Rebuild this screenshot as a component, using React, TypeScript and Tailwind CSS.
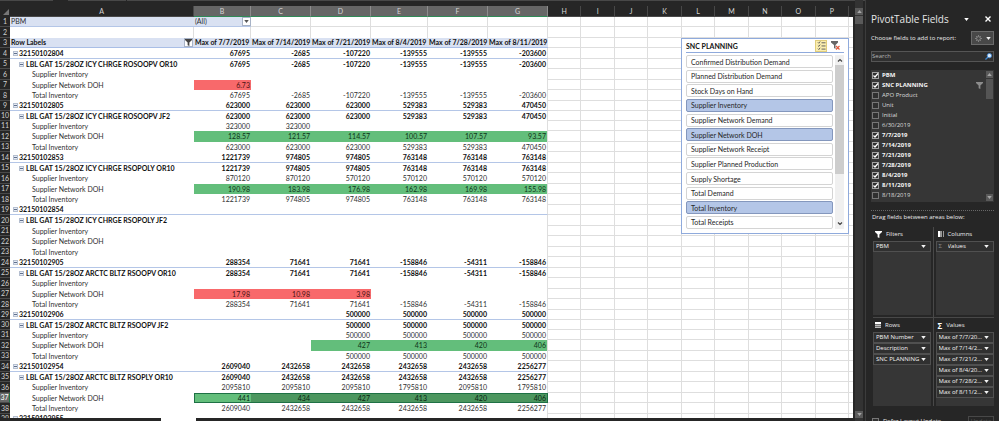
import { useState } from 'react';
import clsx from 'clsx';

type Level = 0 | 1 | 2;
type Tone = 'green' | 'red' | 'selected';

interface PivotRow {
  label: string;
  level: Level;
  values?: string[];
  tone?: Tone;
}

const COLUMNS = ['A', 'B', 'C', 'D', 'E', 'F', 'G', 'H', 'I', 'J', 'K', 'L', 'M', 'N', 'O', 'P'];
const EMPTY_COLUMNS = COLUMNS.slice(7);
const VALUE_HEADERS = ['7/7/2019', '7/14/2019', '7/21/2019', '8/4/2019', '7/28/2019', '8/11/2019'];

const ROWS: PivotRow[] = [
  { label: '32150102804', level: 0, values: ['67695', '-2685', '-107220', '-139555', '-139555', '-203600'] },
  { label: 'LBL GAT 15/28OZ ICY CHRGE ROSOOPV OR10', level: 1, values: ['67695', '-2685', '-107220', '-139555', '-139555', '-203600'] },
  { label: 'Supplier Inventory', level: 2 },
  { label: 'Supplier Network DOH', level: 2, values: ['6.73'], tone: 'red' },
  { label: 'Total Inventory', level: 2, values: ['67695', '-2685', '-107220', '-139555', '-139555', '-203600'] },
  { label: '32150102805', level: 0, values: ['623000', '623000', '623000', '529383', '529383', '470450'] },
  { label: 'LBL GAT 15/28OZ ICY CHRGE ROSOOPV JF2', level: 1, values: ['623000', '623000', '623000', '529383', '529383', '470450'] },
  { label: 'Supplier Inventory', level: 2, values: ['323000', '323000'] },
  { label: 'Supplier Network DOH', level: 2, values: ['128.57', '121.57', '114.57', '100.57', '107.57', '93.57'], tone: 'green' },
  { label: 'Total Inventory', level: 2, values: ['623000', '623000', '623000', '529383', '529383', '470450'] },
  { label: '32150102853', level: 0, values: ['1221739', '974805', '974805', '763148', '763148', '763148'] },
  { label: 'LBL GAT 15/28OZ ICY CHRGE RSOPOLY OR10', level: 1, values: ['1221739', '974805', '974805', '763148', '763148', '763148'] },
  { label: 'Supplier Inventory', level: 2, values: ['870120', '870120', '570120', '570120', '570120', '570120'] },
  { label: 'Supplier Network DOH', level: 2, values: ['190.98', '183.98', '176.98', '162.98', '169.98', '155.98'], tone: 'green' },
  { label: 'Total Inventory', level: 2, values: ['1221739', '974805', '974805', '763148', '763148', '763148'] },
  { label: '32150102854', level: 0 },
  { label: 'LBL GAT 15/28OZ ICY CHRGE RSOPOLY JF2', level: 1 },
  { label: 'Supplier Inventory', level: 2 },
  { label: 'Supplier Network DOH', level: 2 },
  { label: 'Total Inventory', level: 2 },
  { label: '32150102905', level: 0, values: ['288354', '71641', '71641', '-158846', '-54311', '-158846'] },
  { label: 'LBL GAT 15/28OZ ARCTC BLTZ RSOOPV OR10', level: 1, values: ['288354', '71641', '71641', '-158846', '-54311', '-158846'] },
  { label: 'Supplier Inventory', level: 2 },
  { label: 'Supplier Network DOH', level: 2, values: ['17.98', '10.98', '3.98'], tone: 'red' },
  { label: 'Total Inventory', level: 2, values: ['288354', '71641', '71641', '-158846', '-54311', '-158846'] },
  { label: '32150102906', level: 0, values: ['', '', '500000', '500000', '500000', '500000'] },
  { label: 'LBL GAT 15/28OZ ARCTC BLTZ RSOOPV JF2', level: 1, values: ['', '', '500000', '500000', '500000', '500000'] },
  { label: 'Supplier Inventory', level: 2, values: ['', '', '500000', '500000', '500000', '500000'] },
  { label: 'Supplier Network DOH', level: 2, values: ['', '', '427', '413', '420', '406'], tone: 'green' },
  { label: 'Total Inventory', level: 2, values: ['', '', '500000', '500000', '500000', '500000'] },
  { label: '32150102954', level: 0, values: ['2609040', '2432658', '2432658', '2432658', '2432658', '2256277'] },
  { label: 'LBL GAT 15/28OZ ARCTC BLTZ RSOPLY OR10', level: 1, values: ['2609040', '2432658', '2432658', '2432658', '2432658', '2256277'] },
  { label: 'Supplier Inventory', level: 2, values: ['2095810', '2095810', '2095810', '1795810', '2095810', '1795810'] },
  { label: 'Supplier Network DOH', level: 2, values: ['441', '434', '427', '413', '420', '406'], tone: 'selected' },
  { label: 'Total Inventory', level: 2, values: ['2609040', '2432658', '2432658', '2432658', '2432658', '2256277'] },
  { label: '32150102955', level: 0 },
];

const SLICER_ITEMS = [
  'Confirmed Distribution Demand',
  'Planned Distribution Demand',
  'Stock Days on Hand',
  'Supplier Inventory',
  'Supplier Network Demand',
  'Supplier Network DOH',
  'Supplier Network Receipt',
  'Supplier Planned Production',
  'Supply Shortage',
  'Total Demand',
  'Total Inventory',
  'Total Receipts',
];

const FIELDS = [
  { name: 'PBM', checked: true },
  { name: 'SNC PLANNING', checked: true, filtered: true },
  { name: 'APO Product', checked: false },
  { name: 'Unit', checked: false },
  { name: 'Initial', checked: false },
  { name: '6/30/2019', checked: false },
  { name: '7/7/2019', checked: true },
  { name: '7/14/2019', checked: true },
  { name: '7/21/2019', checked: true },
  { name: '7/28/2019', checked: true },
  { name: '8/4/2019', checked: true },
  { name: '8/11/2019', checked: true },
  { name: '8/18/2019', checked: false },
  { name: '8/25/2019', checked: false },
];

const ROW_CLASS = 'h-[10px] even:h-[11px] nth-[20n+10]:h-[10px]';
const GRID_CELL = 'border-r border-b border-[#dedede] p-0';

function Caret({ className }: { className?: string }) {
  return (
    <svg viewBox="0 0 6 4" className={clsx('h-[3px] w-[5px] shrink-0', className)} fill="currentColor">
      <path d="M0 0h6L3 4z" />
    </svg>
  );
}

function Funnel({ className }: { className?: string }) {
  return (
    <svg viewBox="0 0 8 8" className={clsx('h-[7px] w-[7px] shrink-0', className)} fill="currentColor">
      <path d="M0 0h8v1L5 4v4L3 7V4L0 1z" />
    </svg>
  );
}

function ScrollButton({ label, up, className }: { label: string; up?: boolean; className?: string }) {
  return (
    <button aria-label={label} className={clsx('flex h-[7px] w-full shrink-0 items-center justify-center bg-[#5a5a5a] text-[#a8a8a8]', className)}>
      <Caret className={clsx('h-[2px] w-[4px]', up && 'rotate-180')} />
    </button>
  );
}

function CollapseButton({ label }: { label: string }) {
  return (
    <button aria-label={`Collapse ${label}`} className="flex size-[5px] shrink-0 items-center justify-center border border-[#b5bfd0] bg-[#e6ebf4]">
      <span className="h-px w-[3px] bg-[#60708c]" />
    </button>
  );
}

function RowHeading({ row, active }: { row: number; active?: boolean }) {
  return (
    <th
      scope="row"
      className={clsx(
        'border-b border-[#4a4a4a] p-0 text-center font-normal',
        active ? 'border-r border-r-[#1e7145] bg-[#686868] text-white' : 'bg-[#262626] text-[#d0d0d0]',
      )}
    >
      <div className="h-[9px]">{row}</div>
    </th>
  );
}

function EmptyCells() {
  return (
    <>
      {EMPTY_COLUMNS.map((c) => (
        <td key={c} className={GRID_CELL} />
      ))}
      <td className="border-b border-[#dedede] p-0" />
    </>
  );
}

function valueClass(row: PivotRow, index: number) {
  const value = row.values?.[index];
  if (!row.tone || !value) return '';
  if (row.tone === 'red') return 'bg-[#f8696b] text-[#4a1213]';
  if (row.tone === 'green') return 'bg-[#63be7b] text-[#0f3318]';
  return clsx(
    'border-y border-[#1e7145] text-[#0a2411]',
    index === 0 ? 'border-l bg-[#63be7b]' : 'bg-[#4c965f]',
    index === 5 && 'border-r',
  );
}

function Sheet() {
  return (
    <table className="w-full table-fixed border-separate border-spacing-0 bg-white font-['Lato',sans-serif] text-[7px] leading-[9px] whitespace-nowrap text-[#303030]">
      <colgroup>
        <col className="w-[10px]" />
        <col className="w-[184px]" />
        <col className="w-[57px]" />
        <col className="w-[60px]" />
        <col className="w-[60px]" />
        <col className="w-[57px]" />
        <col className="w-[60px]" />
        <col className="w-[60px]" />
        {EMPTY_COLUMNS.map((c) => (
          <col key={c} />
        ))}
        <col className="w-[4px]" />
      </colgroup>
      <thead>
        <tr className="h-[11px]">
          <th className="bg-[#262626] p-0">
            <svg viewBox="0 0 6 6" className="ml-[3px] size-[6px]" fill="#777">
              <path d="M6 0v6H0z" />
            </svg>
          </th>
          {COLUMNS.map((c, i) => (
            <th
              key={c}
              scope="col"
              className={clsx(
                'border-r border-b p-0 font-normal text-[#d6d6d6]',
                i > 0 && i < 7 ? 'border-r-[#8c8c8c] border-b-[#2f8a57] bg-[#666]' : 'border-r-[#484848] border-b-[#484848] bg-[#262626]',
              )}
            >
              {c}
            </th>
          ))}
          <td className="bg-[#262626] p-0" />
        </tr>
      </thead>
      <tbody>
        <tr className={ROW_CLASS}>
          <RowHeading row={1} />
          <td className="border-b border-[#b4c6e7] bg-[#d9e1f2] p-0 pl-px">PBM</td>
          <td className="border-b border-[#b4c6e7] bg-[#d9e1f2] p-0 pl-px">
            <div className="flex items-center justify-between">
              (All)
              <button aria-label="Filter PBM" className="flex size-[9px] items-center justify-center border border-[#a8b3c6] bg-white text-[#555]">
                <Caret className="h-[2px] w-[4px]" />
              </button>
            </div>
          </td>
          {VALUE_HEADERS.slice(1).map((h) => (
            <td key={h} className={GRID_CELL} />
          ))}
          <EmptyCells />
        </tr>
        <tr className={ROW_CLASS}>
          <RowHeading row={2} />
          <td className="border-r border-[#dedede] p-0" />
          {VALUE_HEADERS.map((h) => (
            <td key={h} className="border-r border-[#dedede] p-0" />
          ))}
          <EmptyCells />
        </tr>
        <tr className={ROW_CLASS}>
          <RowHeading row={3} />
          <th className="border-b border-[#a9bee6] bg-[#d9e1f2] p-0 pl-px text-left font-bold text-[#111]">
            <div className="flex items-center justify-between pr-px">
              Row Labels
              <button aria-label="Filter row labels" className="flex size-[9px] items-center justify-center border border-[#a8b3c6] bg-white text-[#444]">
                <Funnel className="h-[5px] w-[5px]" />
              </button>
            </div>
          </th>
          {VALUE_HEADERS.map((h) => (
            <th key={h} className="border-b border-[#a9bee6] bg-[#d9e1f2] p-0 pl-px text-left font-bold text-[#111]">
              Max of {h}
            </th>
          ))}
          <EmptyCells />
        </tr>
        {ROWS.map((row, i) => (
          <tr key={i} className={ROW_CLASS}>
            <RowHeading row={i + 4} active={row.tone === 'selected'} />
            <td
              className={clsx(
                'p-0',
                row.level === 0 && 'border-b border-[#b4c6e7] pl-[3px]',
                row.level === 1 && 'pl-[9px]',
                row.level === 2 && 'pl-[22px]',
                row.level < 2 && 'font-bold text-[#111]',
              )}
            >
              <div className={clsx('flex items-center', row.level === 0 ? 'gap-px' : 'gap-[2px]')}>
                {row.level < 2 && <CollapseButton label={row.label} />}
                {row.label}
              </div>
            </td>
            {VALUE_HEADERS.map((h, v) => (
              <td
                key={h}
                className={clsx(
                  'p-0 pr-px text-right',
                  row.level === 0 && 'border-b border-[#b4c6e7]',
                  row.level < 2 && 'font-bold text-[#111]',
                  v === 5 && row.tone !== 'selected' && 'border-r border-r-[#dedede]',
                  valueClass(row, v),
                )}
              >
                <div className="-my-px">{row.values?.[v]}</div>
              </td>
            ))}
            <EmptyCells />
          </tr>
        ))}
      </tbody>
    </table>
  );
}

function Slicer() {
  const [selected, setSelected] = useState(['Supplier Inventory', 'Supplier Network DOH', 'Total Inventory']);

  const toggle = (item: string) => {
    setSelected((prev) => (prev.includes(item) ? prev.filter((s) => s !== item) : [...prev, item]));
  };

  return (
    <section className="absolute top-[32px] right-[4px] w-[168px] border border-[#8faadc] bg-white px-[4px] pb-[4px] font-['Lato',sans-serif] text-[#262626]">
      <header className="flex h-[14px] items-center border-b border-[#8faadc] text-[7px] leading-[10px]">
        <h2 className="flex-1 font-bold text-[#111]">SNC PLANNING</h2>
        <button aria-label="Multi-select" className="flex h-[12px] w-[12px] items-center justify-center border border-[#e0cd7c] bg-[#fbeeb0]">
          <svg viewBox="0 0 10 10" className="size-[9px]" fill="none" stroke="#555" strokeWidth="1">
            <path d="M1 1.5l1 1L3.500.5M1 5l1 1 1.500-2M1 8.500l1 1 1.500-2M5 2h4.500M5 5.500h4.500M5 9h4.500" />
          </svg>
        </button>
        <button aria-label="Clear filter" className="mx-[4px] flex h-[12px] w-[9px] items-center justify-center">
          <svg viewBox="0 0 9 9" className="size-[9px]">
            <path d="M0 0h7v1.500L4.500 4v4L3 7V4L0 1.500z" fill="#666" />
            <path d="M5 5l3.500 3.500M8.500 5L5 8.500" stroke="#e0593c" strokeWidth="1.200" />
          </svg>
        </button>
      </header>
      <div className="mt-[2px] flex h-[174px] gap-[2px]">
        <ul className="flex flex-1 flex-col justify-between">
          {SLICER_ITEMS.map((item) => (
            <li key={item} className="flex">
              <button
                aria-pressed={selected.includes(item)}
                onClick={() => toggle(item)}
                className={clsx(
                  'h-[13px] w-full rounded-[2px] border pl-[4px] text-left text-[7px] leading-[10px]',
                  selected.includes(item) ? 'border-[#8497bd] bg-[#b4c6e7]' : 'border-[#d4d4d4] bg-white',
                )}
              >
                {item}
              </button>
            </li>
          ))}
        </ul>
        <div className="flex w-[9px] flex-col bg-[#f0f0f0]">
          <button aria-label="Scroll slicer up" className="flex h-[10px] items-center justify-center">
            <svg viewBox="0 0 6 4" className="h-[4px] w-[6px]" fill="none" stroke="#444" strokeWidth="1.200">
              <path d="M1 3.500l2-2 2 2" />
            </svg>
          </button>
          <div className="h-[109px] bg-[#cdcdcd]" />
          <button aria-label="Scroll slicer down" className="mt-auto flex h-[10px] items-center justify-center">
            <svg viewBox="0 0 6 4" className="h-[4px] w-[6px]" fill="none" stroke="#444" strokeWidth="1.200">
              <path d="M1 .5l2 2 2-2" />
            </svg>
          </button>
        </div>
      </div>
    </section>
  );
}

function CheckBox({ id, defaultChecked }: { id: string; defaultChecked?: boolean }) {
  return (
    <span className="grid size-[7px] shrink-0">
      <input
        id={id}
        type="checkbox"
        defaultChecked={defaultChecked}
        className="peer col-start-1 row-start-1 size-[7px] appearance-none border border-[#777] bg-[#303030] checked:border-[#a0a0a0]"
      />
      <svg
        viewBox="0 0 7 7"
        className="pointer-events-none invisible col-start-1 row-start-1 size-[7px] peer-checked:visible"
        fill="none"
        stroke="#fff"
        strokeWidth="1.200"
      >
        <path d="M1.500 3.500L3 5l3-3.500" />
      </svg>
    </span>
  );
}

function FieldList() {
  return (
    <div className="mt-[8px] flex h-[132px] overflow-hidden bg-[#363636]">
      <ul className="flex-1">
        {FIELDS.map((field) => (
          <li key={field.name} className="flex h-[10px] items-center gap-[3px] pl-px">
            <CheckBox id={`field-${field.name}`} defaultChecked={field.checked} />
            <label htmlFor={`field-${field.name}`} className={clsx('flex-1', field.checked ? 'font-bold text-[#f4f4f4]' : 'text-[#dcdcdc]')}>
              {field.name}
            </label>
            {field.filtered && <Funnel className="mr-[3px] h-[6px] w-[6px] text-[#8c8c8c]" />}
          </li>
        ))}
      </ul>
      <div className="mr-px flex w-[7px] flex-col pt-px">
        <ScrollButton label="Scroll fields up" up />
        <div className="mt-px h-[20px] bg-[#555]" />
        <ScrollButton label="Scroll fields down" className="mt-auto mb-px" />
      </div>
    </div>
  );
}

interface AreaProps {
  title: string;
  icon: React.ReactNode;
  items: string[];
  sigma?: boolean;
}

function Area({ title, icon, items, sigma }: AreaProps) {
  return (
    <section className="min-w-0">
      <h3 className="flex h-[14px] items-center gap-[4px] px-[2px] text-[#ececec]">
        {icon}
        {title}
      </h3>
      <div className="h-[74px] bg-[#363636]">
        {items.map((item) => (
          <button key={item} className="flex h-[11px] w-full items-center border border-[#505050] bg-[#303030] pr-[4px] pl-[2px] text-[#f4f4f4]">
            {sigma && <span className="w-[9px] text-left text-[#8a8a8a]">Σ</span>}
            <span className="flex-1 truncate text-left">{item}</span>
            <Caret className="ml-px" />
          </button>
        ))}
      </div>
    </section>
  );
}

function FieldsPane() {
  return (
    <aside className="flex w-[134px] shrink-0 flex-col overflow-hidden border-l border-[#3c3c3c] bg-[#262626] pt-[11px] pr-[5px] pl-[5px] font-['Open_Sans',sans-serif] text-[6px] leading-[9px] whitespace-nowrap text-[#ececec]">
      <div className="flex h-[16px] shrink-0 items-center">
        <h2 className="flex-1 text-[10px] leading-[14px] text-[#e6e6e6]">PivotTable Fields</h2>
        <button aria-label="Pane options" className="mr-[16px] text-white">
          <Caret />
        </button>
        <button aria-label="Close pane" className="mr-[3px]">
          <svg viewBox="0 0 6 6" className="size-[6px]" stroke="#fff" strokeWidth="1.400">
            <path d="M.5.5l5 5M5.500.5l-5 5" />
          </svg>
        </button>
      </div>
      <div className="mt-[4px] flex h-[14px] shrink-0 items-center justify-between">
        <p>Choose fields to add to report:</p>
        <button aria-label="Tools" className="flex h-[14px] w-[23px] items-center justify-center gap-[4px] border border-[#6a6a6a] bg-[#484848]">
          <svg viewBox="0 0 8 8" className="size-[7px]" fill="none" stroke="#8c8c8c">
            <circle cx="4" cy="4" r="2.200" />
            <path d="M4 0v1.500M4 6.500V8M0 4h1.500M6.500 4H8M1.200 1.200l1 1M5.800 5.800l1 1M6.800 1.200l-1 1M2.200 5.800l-1 1" />
          </svg>
          <Caret className="text-[#f0f0f0]" />
        </button>
      </div>
      <div className="mt-[6px] flex h-[11px] shrink-0 items-center border border-[#555] bg-[#303030]">
        <input aria-label="Search fields" placeholder="Search" className="min-w-0 flex-1 bg-transparent outline-none placeholder:text-[#b4b4b4]" />
        <svg viewBox="0 0 8 8" className="mr-px size-[7px]">
          <path d="M3.500 4.500L.5 7.500" stroke="#3f86d0" strokeWidth="1.500" />
          <circle cx="5" cy="3" r="2.500" fill="#dcebfa" stroke="#3f86d0" />
        </svg>
      </div>
      <div className="shrink-0">
        <FieldList />
      </div>
      <p className="mt-[8px] shrink-0 border-t border-dotted border-[#686868] pt-[2px] pl-px">Drag fields between areas below:</p>
      <div className="mt-[5px] grid shrink-0 grid-cols-2 pl-[2px]">
        <div className="border-r border-b border-[#484848] pr-[2px] pb-[2px]">
          <Area title="Filters" icon={<Funnel className="text-white" />} items={['PBM']} />
        </div>
        <div className="border-b border-[#484848] pb-[2px] pl-[2px]">
          <Area
            title="Columns"
            sigma
            icon={
              <svg viewBox="0 0 6 6" className="size-[6px]">
                <path d="M0 0h2.500v6H0z" fill="#fff" />
                <path d="M3 0h1v6H3zM5 0h1v6H5z" fill="#999" />
              </svg>
            }
            items={['Values']}
          />
        </div>
        <div className="border-r border-[#484848] pr-[2px]">
          <Area
            title="Rows"
            icon={
              <svg viewBox="0 0 6 6" className="size-[6px]">
                <path d="M0 0h6v2H0z" fill="#fff" />
                <path d="M0 2.500h6V4H0zM0 4.500h6V6H0z" fill="#bbb" />
              </svg>
            }
            items={['PBM Number', 'Description', 'SNC PLANNING']}
          />
        </div>
        <div className="pl-[2px]">
          <Area
            title="Values"
            icon={<span className="text-[8px] font-bold text-white">Σ</span>}
            items={['Max of 7/7/2019', 'Max of 7/14/2019', 'Max of 7/21/2019', 'Max of 8/4/2019', 'Max of 7/28/2019', 'Max of 8/11/2019']}
          />
        </div>
      </div>
      <div className="mt-[10px] flex h-[10px] shrink-0 items-center gap-[4px] pl-px">
        <CheckBox id="defer" />
        <label htmlFor="defer" className="flex-1">
          Defer Layout Update
        </label>
        <button disabled className="h-[10px] w-[26px] border border-[#484848] leading-[8px] text-[#5c5c5c]">
          Update
        </button>
      </div>
    </aside>
  );
}

export default function App() {
  return (
    <div className="flex h-screen flex-col overflow-hidden bg-[#262626]">
      <div className="flex h-[6px] shrink-0 items-start gap-px">
        <span className="mr-[14px] h-px w-[53px] bg-[#484848]" />
        <span className="h-px w-[58px] bg-[#484848]" />
        <span className="h-px flex-1 bg-[#484848]" />
      </div>
      <div className="-mt-[6px] flex min-h-0 flex-1">
        <main className="flex min-w-0 flex-1 flex-col pt-[6px]">
          <div className="relative min-h-0 flex-1 overflow-hidden">
            <Sheet />
            <div className="absolute inset-x-0 top-0">
              <Slicer />
            </div>
          </div>
          <nav aria-label="Sheet tabs" className="flex h-[3px] shrink-0">
            <span className="w-[161px]" />
            <span className="w-[35px] bg-white" />
          </nav>
        </main>
        <div className="ml-[2px] flex w-[8px] shrink-0 flex-col bg-[#333] pt-[8px] pb-[3px]">
          <ScrollButton label="Scroll up" up />
          <div className="mt-px h-[8px] bg-[#5a5a5a]" />
          <ScrollButton label="Scroll down" className="mt-auto" />
        </div>
        <div className="w-[2px] shrink-0" />
        <FieldsPane />
      </div>
    </div>
  );
}
